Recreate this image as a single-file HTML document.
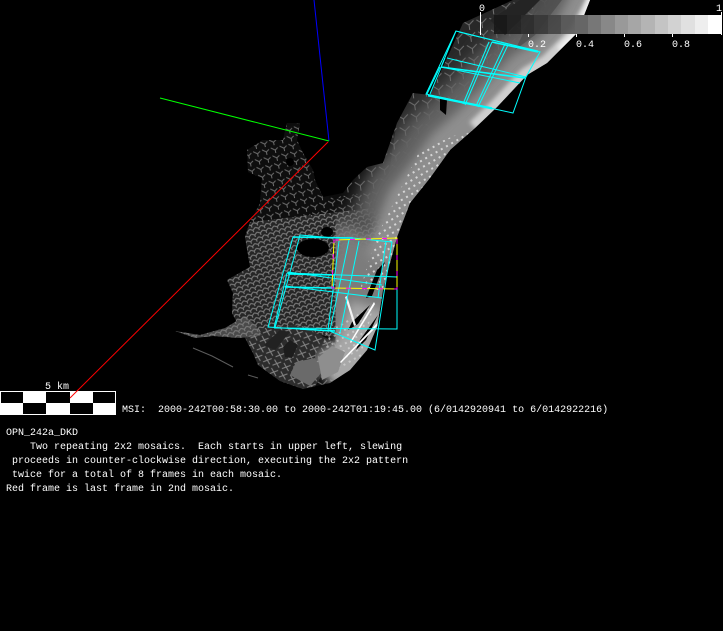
<!DOCTYPE html>
<html><head><meta charset="utf-8"><style>
html,body{margin:0;padding:0;background:#000;width:723px;height:631px;overflow:hidden}
svg{display:block}
text{font-family:"Liberation Mono",monospace;font-size:10px;fill:#fff}
</style></head><body>
<svg width="723" height="631" viewBox="0 0 723 631" xmlns="http://www.w3.org/2000/svg">
<defs>
<pattern id="big" width="13" height="12" patternUnits="userSpaceOnUse" patternTransform="rotate(-8)">
<path d="M1 2l5 4l5-4M6 6v5" fill="none" stroke="#727272" stroke-width="1"/></pattern>
<pattern id="med" width="9" height="8" patternUnits="userSpaceOnUse" patternTransform="rotate(-12)">
<path d="M0 1l4 3l3-2M4 4v3" fill="none" stroke="#707070" stroke-width="1"/></pattern>
<pattern id="small" width="6" height="5" patternUnits="userSpaceOnUse" patternTransform="rotate(-20)">
<path d="M0 1l3 2l3-2M3 3v2" fill="none" stroke="#7c7c7c" stroke-width="1.1"/></pattern>
<pattern id="lowx" width="10" height="9" patternUnits="userSpaceOnUse" patternTransform="rotate(20)">
<rect width="10" height="9" fill="#2c2c2c"/><path d="M1 1l7 6M8 1l-7 6" fill="none" stroke="#858585" stroke-width="1.1"/></pattern>
<pattern id="dots" width="6" height="6" patternUnits="userSpaceOnUse" patternTransform="rotate(-30)">
<rect x="1" y="1" width="2" height="2" fill="#e8e8e8"/></pattern>
<filter id="b10" x="-30%" y="-30%" width="160%" height="160%"><feGaussianBlur stdDeviation="9"/></filter>
<filter id="b5" x="-30%" y="-30%" width="160%" height="160%"><feGaussianBlur stdDeviation="5"/></filter>
<filter id="b2" x="-30%" y="-30%" width="160%" height="160%"><feGaussianBlur stdDeviation="2"/></filter>
<clipPath id="body"><polygon points="513,0 590,0 577,33 547,63 527,75 497,107 475,128 450,150 430,178 410,203 397,237 390,263 383,290 377,327 367,350 350,370 330,383 303,389 280,381 258,365 253,353 245,338 232,313 233,293 227,280 250,267 245,237 250,222 260,203 262,178 248,172 247,150 263,140 283,140 287,123 300,123 297,140 303,153 313,170 315,180 323,197 343,193 353,180 367,167 383,163 397,123 413,93 430,95 463,23"/></clipPath>
</defs>

<!-- body mesh -->
<g clip-path="url(#body)">
<rect x="220" y="0" width="380" height="400" fill="#0c0c0c"/>
<polygon points="397,120 420,70 470,15 520,-5 560,-5 540,50 470,110 420,180 385,200" fill="#282828"/>
<rect x="220" y="0" width="380" height="400" fill="url(#big)"/>
<polygon points="240,140 310,120 330,200 380,190 410,170 430,180 400,245 225,260" fill="#0e0e0e"/>
<polygon points="240,140 310,120 330,200 380,190 410,170 430,180 400,245 225,260" fill="url(#med)"/>
<polygon points="225,225 400,205 400,340 225,330" fill="#262626"/>
<polygon points="225,225 400,205 400,340 225,330" fill="url(#small)"/>
<polygon points="240,330 300,325 340,345 310,395 240,395" fill="url(#lowx)"/>

<!-- soft bands following the lit edge -->
<g fill="none" stroke-linejoin="round">
<path filter="url(#b10)" d="M397 237L390 263L383 290L377 327L367 350L350 370" stroke="#7c7c7c" stroke-width="130"/>
<path filter="url(#b10)" d="M600 -10L577 33L547 63L527 75L497 107L475 128L450 150L430 178L410 203L397 237" stroke="#646464" stroke-width="100"/>
<path filter="url(#b5)" d="M600 -10L577 33L547 63L527 75L497 107L475 128L450 150L430 178L410 203L397 237L390 263" stroke="#8e8e8e" stroke-width="48"/>
<path filter="url(#b5)" d="M380 310L367 350L350 370L330 383" stroke="#a8a8a8" stroke-width="60"/>
<path filter="url(#b2)" d="M600 -10L577 33L547 63L527 75L497 107L475 128" stroke="#cfcfcf" stroke-width="16"/>
<path filter="url(#b2)" d="M596 -10L577 33L560 50" stroke="#f0f0f0" stroke-width="8"/>
</g>
<polygon points="440,98 447,100 446,115 440,110" fill="#000"/>
<polygon points="490,20 520,0 540,0 505,35" fill="#242424"/>
<polygon points="540,0 562,0 535,35 515,50" fill="#4a4a4a" opacity=".7"/>
<polygon points="420,150 480,125 440,190 400,250 390,290 360,290 375,240 400,190" fill="url(#dots)" opacity=".8"/>
<polygon points="325,330 375,300 360,360 320,375" fill="url(#dots)" opacity=".5"/>

<!-- lower blocks -->
<polygon points="290,375 296,362 315,358 322,372 310,386" fill="#6a6a6a"/>
<polygon points="318,358 332,346 345,352 338,372 322,380" fill="#8e8e8e"/>
<polygon points="283,347 290,340 298,345 292,358 285,357" fill="#1c1c1c"/>
<polygon points="264,345 280,330 290,332 275,350" fill="#222"/>

<!-- streaks -->
<polygon points="385,262 377,270 366,298 372,296" fill="#000"/>
<polygon points="370,305 352,322 348,330 358,324" fill="#000"/>
<polygon points="378,315 360,340 356,350 366,340" fill="#000"/>
<polygon points="374,302 350,342 351,343 375,304" fill="#fff"/>
<polygon points="381,319 340,362 341,363 382,321" fill="#fff"/>
<polygon points="347,296 356,325 354,326 345,297" fill="#f4f4f4"/>
<ellipse cx="313" cy="248" rx="16" ry="9" fill="#000"/>
<ellipse cx="327" cy="232" rx="6" ry="5" fill="#000"/>
<circle cx="290" cy="162" r="4" fill="#000"/>
</g>

<!-- tail -->
<polygon points="175,331 200,335 225,328 245,316 255,325 262,335 240,338 213,336 195,338" fill="#4a4a4a"/>
<polygon points="175,331 200,335 225,328 245,316 255,325 262,335 240,338 213,336 195,338" fill="url(#small)"/>
<path d="M193 348L212 356L233 367M248 375L258 378" fill="none" stroke="#5c5c5c" stroke-width="1"/>

<!-- axes -->
<g fill="none" stroke-width="1">
<path d="M314 0L329 141" stroke="#0000ff"/>
<path d="M160 98L329 141" stroke="#00ff00"/>
<path d="M328 142L70 398" stroke="#ff0000"/>
</g>

<!-- colorbar -->
<g shape-rendering="crispEdges">
<g opacity=".9">
<rect x="494" y="15" width="14" height="19" fill="#181818"/><rect x="507" y="15" width="14" height="19" fill="#222"/><rect x="521" y="15" width="14" height="19" fill="#2c2c2c"/><rect x="534" y="15" width="14" height="19" fill="#383838"/><rect x="548" y="15" width="14" height="19" fill="#444"/><rect x="561" y="15" width="14" height="19" fill="#555"/></g>
<rect x="575" y="15" width="14" height="19" fill="#666"/><rect x="588" y="15" width="14" height="19" fill="#777"/><rect x="601" y="15" width="14" height="19" fill="#888"/><rect x="615" y="15" width="14" height="19" fill="#999"/><rect x="628" y="15" width="14" height="19" fill="#a6a6a6"/><rect x="641" y="15" width="14" height="19" fill="#b4b4b4"/><rect x="655" y="15" width="14" height="19" fill="#c4c4c4"/><rect x="668" y="15" width="14" height="19" fill="#d2d2d2"/><rect x="681" y="15" width="14" height="19" fill="#e0e0e0"/><rect x="695" y="15" width="14" height="19" fill="#eeeeee"/><rect x="708" y="15" width="14" height="19" fill="#fff"/>
<rect x="480" y="12" width="1" height="23" fill="#fff"/><rect x="528" y="34" width="1" height="3" fill="#fff"/><rect x="576" y="34" width="1" height="3" fill="#fff"/><rect x="624" y="34" width="1" height="3" fill="#fff"/><rect x="672" y="34" width="1" height="3" fill="#fff"/><rect x="721" y="12" width="1" height="23" fill="#fff"/>
</g>
<text x="479" y="11">0</text><text x="528" y="47">0.2</text><text x="576" y="47">0.4</text><text x="624" y="47">0.6</text><text x="672" y="47">0.8</text><text x="716" y="11">1</text>

<!-- upper frames -->
<g fill="none" stroke="#00ffff" stroke-width="1">
<path d="M456 31L540 52L526 77L513 113L426 94Z"/>
<path d="M459 32L538 51M447 58L526 77M441 67L520 83"/>
<path d="M445 58L430 94M440 67L427 94M456 31L441 67"/>
<path d="M492 42L465 105M489 42L463 104M508 45L478 107M505 44L476 106"/>
<path d="M428 96L492 109"/>
<path stroke-width="1.6" d="M492 42L538 52M441 67L525 78M428 95L492 108"/>
</g>

<!-- lower frames -->
<g fill="none" stroke="#00ffff" stroke-width="1">
<path d="M293 237L353 238M300 235L334 238M293 237L268 327L330 331L375 350L392 242L353 238"/>
<path d="M300 235L275 328M287 273L274 328M274 328L397 329L397 277L287 273"/>
<path d="M288 272L382 285M285 286L382 298M349 240L330 330M339 241L328 330M359 241L340 333"/>
<path d="M386 241L378 298"/>
<path stroke-width="1.6" d="M293 237L353 238M288 274L335 275M285 287L332 288M300 329L335 331"/>
</g>
<path d="M334 240L397 238V289L332 288Z" fill="none" stroke="#ffff00" stroke-width="1"/>
<path d="M334 240L397 238V289L332 288Z" fill="none" stroke="#ff00ff" stroke-width="1" stroke-dasharray="5 11"/>

<!-- scale bar -->
<g shape-rendering="crispEdges">
<rect x="0" y="391" width="116" height="24" fill="#fff"/>
<rect x="1" y="392" width="22" height="11" fill="#000"/><rect x="46" y="392" width="24" height="11" fill="#000"/><rect x="93" y="392" width="22" height="11" fill="#000"/>
<rect x="23" y="403" width="23" height="11" fill="#000"/><rect x="70" y="403" width="23" height="11" fill="#000"/>
</g>
<path d="M78 390L70 398" stroke="#f00" fill="none"/>
<text x="45" y="389">5 km</text>

<text x="122" y="412" xml:space="preserve">MSI:  2000-242T00:58:30.00 to 2000-242T01:19:45.00 (6/0142920941 to 6/0142922216)</text>
<text x="6" y="435" xml:space="preserve">OPN_242a_DKD</text>
<text x="6" y="449" xml:space="preserve">    Two repeating 2x2 mosaics.  Each starts in upper left, slewing</text>
<text x="6" y="463" xml:space="preserve"> proceeds in counter-clockwise direction, executing the 2x2 pattern</text>
<text x="6" y="477" xml:space="preserve"> twice for a total of 8 frames in each mosaic.</text>
<text x="6" y="491" xml:space="preserve">Red frame is last frame in 2nd mosaic.</text>
</svg>
</body></html>
